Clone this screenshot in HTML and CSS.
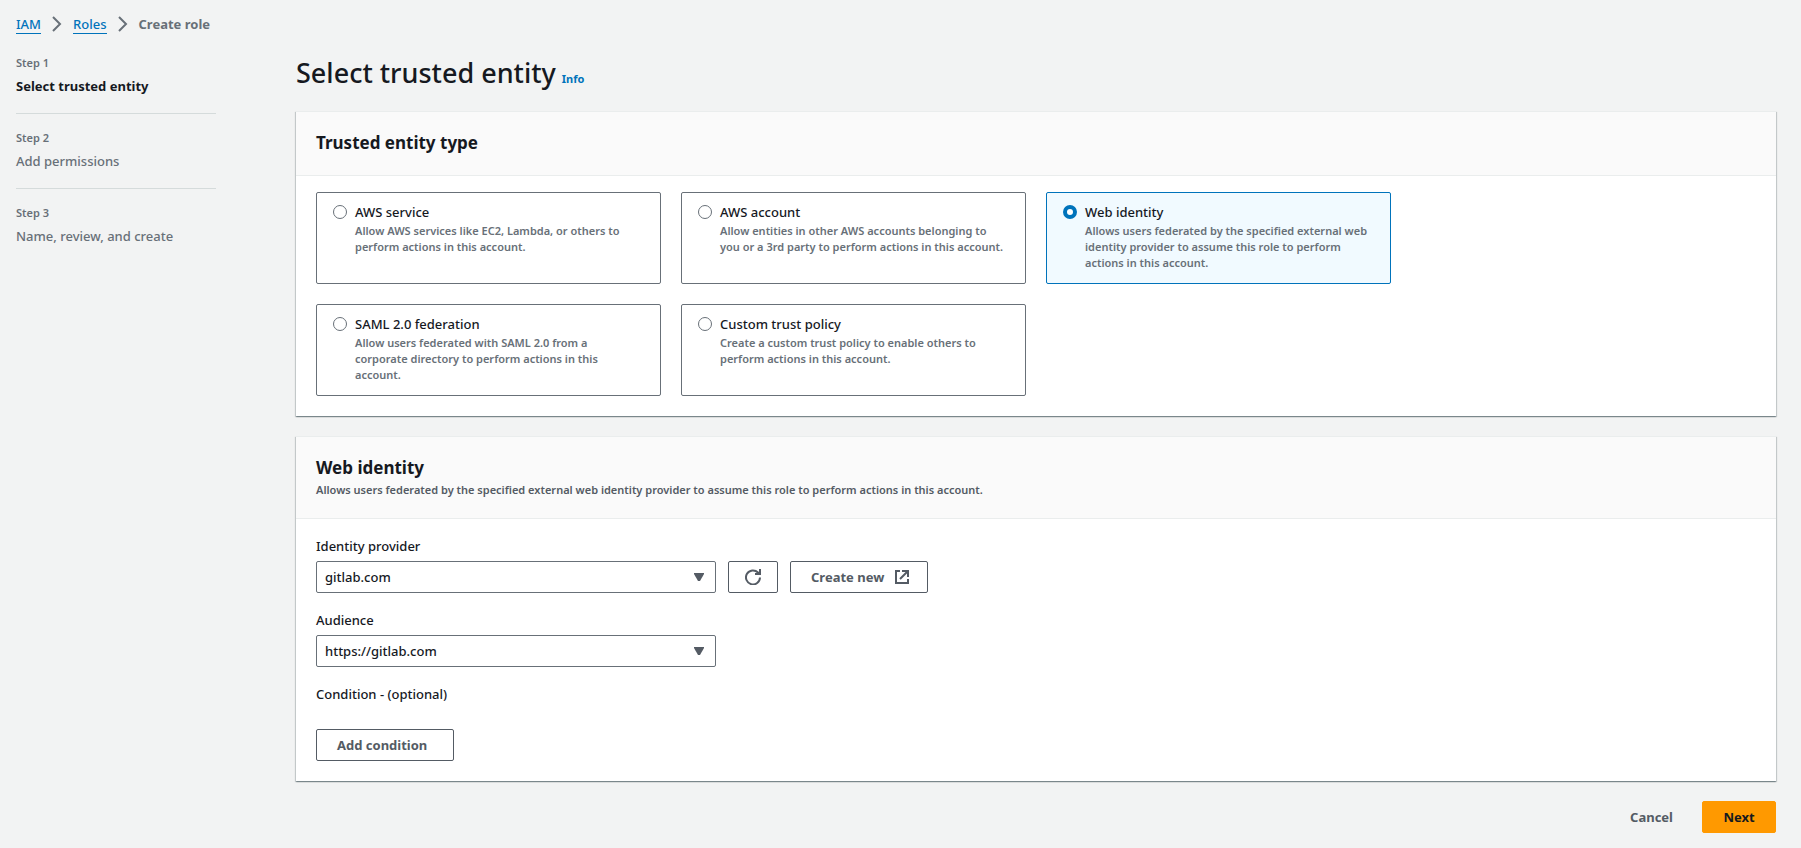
FILE: index.html
```html
<!DOCTYPE html>
<html lang="en">
<head>
<meta charset="utf-8">
<title>Create role</title>
<meta name="viewport" content="width=device-width, initial-scale=1">
<link rel="stylesheet" href="styles.css">
</head>
<body>
<div class="page">
  <nav class="breadcrumbs" aria-label="Breadcrumbs">
    <a class="crumb-link" href="#">IAM</a>
    <svg class="crumb-sep" viewBox="0 0 10 16" aria-hidden="true"><path d="M1 1l7 7-7 7"/></svg>
    <a class="crumb-link" href="#">Roles</a>
    <svg class="crumb-sep" viewBox="0 0 10 16" aria-hidden="true"><path d="M1 1l7 7-7 7"/></svg>
    <span class="crumb-current">Create role</span>
  </nav>
  <div class="layout">
    <ol class="steps">
      <li class="step step-active"><span class="step-no">Step 1</span><span class="step-name">Select trusted entity</span></li>
      <li class="step"><span class="step-no">Step 2</span><span class="step-name">Add permissions</span></li>
      <li class="step"><span class="step-no">Step 3</span><span class="step-name">Name, review, and create</span></li>
    </ol>
    <main class="main">
      <div class="title-row">
        <h1 class="title">Select trusted entity</h1>
        <a class="info" href="#">Info</a>
      </div>

      <section class="card">
        <header class="card-head"><h2 class="card-title">Trusted entity type</h2></header>
        <div class="tiles">
          <label class="tile">
            <input class="radio" type="radio" name="entity">
            <span class="tile-text"><span class="tile-name">AWS service</span><span class="tile-desc">Allow AWS services like EC2, Lambda, or others to perform actions in this account.</span></span>
          </label>
          <label class="tile">
            <input class="radio" type="radio" name="entity">
            <span class="tile-text"><span class="tile-name">AWS account</span><span class="tile-desc">Allow entities in other AWS accounts belonging to you or a 3rd party to perform actions in this account.</span></span>
          </label>
          <label class="tile tile-selected">
            <input class="radio" type="radio" name="entity" checked>
            <span class="tile-text"><span class="tile-name">Web identity</span><span class="tile-desc">Allows users federated by the specified external web identity provider to assume this role to perform actions in this account.</span></span>
          </label>
          <label class="tile tile-new-row">
            <input class="radio" type="radio" name="entity">
            <span class="tile-text"><span class="tile-name">SAML 2.0 federation</span><span class="tile-desc">Allow users federated with SAML 2.0 from a corporate directory to perform actions in this account.</span></span>
          </label>
          <label class="tile">
            <input class="radio" type="radio" name="entity">
            <span class="tile-text"><span class="tile-name">Custom trust policy</span><span class="tile-desc">Create a custom trust policy to enable others to perform actions in this account.</span></span>
          </label>
        </div>
      </section>

      <section class="card">
        <header class="card-head">
          <h2 class="card-title">Web identity</h2>
          <p class="card-desc">Allows users federated by the specified external web identity provider to assume this role to perform actions in this account.</p>
        </header>
        <div class="form">
          <div class="field">
            <label class="label" for="provider">Identity provider</label>
            <div class="controls">
              <div class="select-box">
                <select class="select" id="provider"><option>gitlab.com</option></select>
                <svg class="caret" viewBox="0 0 12 8" aria-hidden="true"><path d="M1 0h10v1L7 8H5L1 1z"/></svg>
              </div>
              <button class="button button-icon" type="button" aria-label="Refresh">
                <svg class="icon" viewBox="0 0 16 16" aria-hidden="true"><path d="M15 8.500a7 7 0 1 1-2-5l1.500 1.500"/><path d="M15 0v5h-5"/></svg>
              </button>
              <button class="button button-wide" type="button">Create new
                <svg class="icon" viewBox="0 0 16 16" aria-hidden="true"><path d="M6 2H2v12h12v-4"/><path d="M8 2h6v6M14 2L6 10"/></svg>
              </button>
            </div>
          </div>
          <div class="field">
            <label class="label" for="audience">Audience</label>
            <div class="select-box">
              <select class="select" id="audience"><option>https://gitlab.com</option></select>
              <svg class="caret" viewBox="0 0 12 8" aria-hidden="true"><path d="M1 0h10v1L7 8H5L1 1z"/></svg>
            </div>
          </div>
          <div class="condition">
            <span class="label">Condition - (optional)</span>
            <button class="button button-wide" type="button">Add condition</button>
          </div>
        </div>
      </section>

      <footer class="actions">
        <button class="button button-plain" type="button">Cancel</button>
        <button class="button button-primary" type="button">Next</button>
      </footer>
    </main>
  </div>
</div>
</body>
</html>
```
FILE: styles.css
```css
* { box-sizing: border-box; }
body {
  margin: 0;
  background: #f2f3f3;
  color: #16191f;
  font: 500 13px/22px "Noto Sans", "Open Sans", sans-serif;
}
h1, h2, p, ol { margin: 0; padding: 0; }
.page { padding: 13px 25px 15px 16px; }
.breadcrumbs { display: flex; align-items: center; height: 22px; }
.crumb-link { color: #0073bb; text-decoration: none; border-bottom: 1px solid #0073bb; line-height: 18px; }
.crumb-sep { width: 10px; height: 16px; margin: 0 11px; fill: none; stroke: #687078; stroke-width: 2; }
.crumb-current { color: #687078; font-weight: 700; }
.layout { display: grid; grid-template-columns: 200px minmax(0, 1fr); gap: 80px; padding-top: 20px; }
.steps { list-style: none; }
.step { display: flex; flex-direction: column; gap: 4px; padding: 16px 0; border-bottom: 1px solid #d5dbdb; color: #687078; }
.step:first-child { padding-top: 0; }
.step:last-child { border-bottom: 0; }
.step-no { font-size: 11px; line-height: 16px; font-weight: 600; }
.step-active .step-name { color: #16191f; font-weight: 700; }
.main { display: flex; flex-direction: column; gap: 20px; }
.title-row { display: flex; align-items: baseline; gap: 6px; }
.title { font-size: 27px; line-height: 36px; font-weight: 500; }
.info { color: #0073bb; font-size: 11px; line-height: 16px; font-weight: 700; text-decoration: none; }
.card { background: #fff; border-top: 1px solid #eaeded; box-shadow: 0 1px 1px 0 rgba(0, 28, 36, .3), 1px 1px 1px 0 rgba(0, 28, 36, .15), -1px 1px 1px 0 rgba(0, 28, 36, .15); }
.card-head { background: #fafafa; border-bottom: 1px solid #eaeded; padding: 19px 20px 21px; }
.card-title { font-size: 17px; line-height: 23px; font-weight: 700; }
.card-desc { margin: 2px 0 -2px; color: #545b64; font-size: 11px; line-height: 18px; font-weight: 600; }
.tiles { display: grid; grid-template-columns: repeat(4, minmax(0, 1fr)); gap: 20px; padding: 16px 20px 20px; }
.tile { display: flex; gap: 8px; min-height: 92px; padding: 8px 20px 10px 16px; border: 1px solid #687078; border-radius: 2px; }
.tile-selected { background: #f1faff; border-color: #0073bb; }
.tile-new-row { grid-column-start: 1; }
.radio { appearance: none; flex: none; width: 14px; height: 14px; margin: 4px 0 0; border: 1px solid #687078; border-radius: 50%; background: #fff; }
.radio:checked { border: 4px solid #0073bb; }
.tile-text { display: flex; flex-direction: column; }
.tile-desc { color: #687078; font-size: 11px; line-height: 16px; font-weight: 600; }
.form { display: flex; flex-direction: column; gap: 16px; padding: 16px 20px 20px; }
.field { display: flex; flex-direction: column; gap: 4px; }
.controls { display: flex; gap: 12px; }
.select-box { position: relative; width: 400px; }
.select { appearance: none; display: block; width: 100%; height: 32px; padding: 0 32px 0 8px; border: 1px solid #687078; border-radius: 2px; background: #fff; color: #16191f; font: inherit; }
.caret { position: absolute; right: 11px; top: 12px; width: 12px; height: 8px; fill: #545b64; }
.button { display: inline-flex; align-items: center; justify-content: center; gap: 10px; height: 32px; padding: 0 20px; border: 1px solid #545b64; border-radius: 2px; background: #fff; color: #545b64; font: inherit; font-weight: 700; }
.button-icon { width: 50px; padding: 0; }
.button-wide { min-width: 138px; justify-content: flex-start; padding: 0 15px 0 20px; }
.icon { flex: none; width: 16px; height: 16px; fill: none; stroke: currentColor; stroke-width: 2; }
.condition { display: flex; flex-direction: column; align-items: flex-start; gap: 24px; }
.actions { display: flex; justify-content: flex-end; gap: 8px; }
.button-plain { background: transparent; border-color: transparent; }
.button-primary { min-width: 74px; background: #ff9900; border-color: #ff9900; color: #16191f; }
```
